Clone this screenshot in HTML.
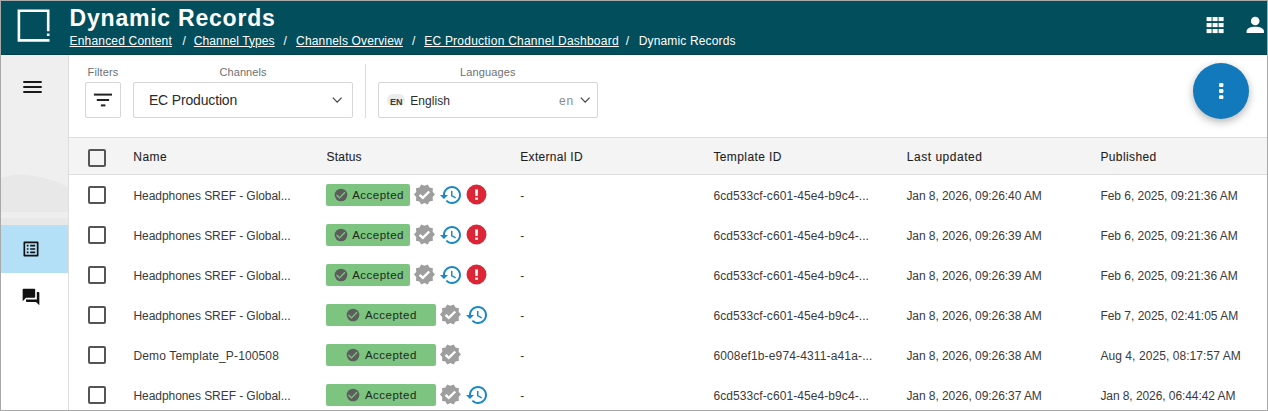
<!DOCTYPE html>
<html><head><meta charset="utf-8">
<style>
html,body{margin:0;padding:0;}
body{width:1268px;height:411px;overflow:hidden;position:relative;background:#fff;font-family:"Liberation Sans",sans-serif;}
span{position:absolute;white-space:nowrap;line-height:1;}
.abs{position:absolute;}
.cb{position:absolute;width:13.5px;height:13.5px;border:2px solid #555;border-radius:2px;box-sizing:content-box;}
.badge{position:absolute;height:22px;background:#7cc47f;border-radius:2px;}
</style></head><body>
<!-- header -->
<div class="abs" style="left:0;top:0;width:1268px;height:55px;background:#024e5c;"></div>
<div class="abs" style="left:0;top:54px;width:1268px;height:1px;background:#013f4b;"></div>
<svg class="abs" style="left:0;top:0" width="60" height="50" viewBox="0 0 60 50">
<path fill="#fff" d="M17.6 9.4 H49.5 V31.3 H46.9 V12.1 H20.2 V39 H49.5 V41.7 H17.6 Z M46.9 33.4 H49.5 V36 H46.9 Z"/>
</svg>
<svg class="abs" style="left:1200px;top:10px" width="68" height="30" viewBox="1200 10 68 30">
<g fill="#fff">
<rect x="1206.6" y="17" width="5" height="4.1"/><rect x="1212.6" y="17" width="5" height="4.1"/><rect x="1218.6" y="17" width="5" height="4.1"/><rect x="1206.6" y="23" width="5" height="4.1"/><rect x="1212.6" y="23" width="5" height="4.1"/><rect x="1218.6" y="23" width="5" height="4.1"/><rect x="1206.6" y="29" width="5" height="4.1"/><rect x="1212.6" y="29" width="5" height="4.1"/><rect x="1218.6" y="29" width="5" height="4.1"/>
<circle cx="1255.2" cy="21" r="4.3"/>
<path d="M1246.6 33.1 V31.2 C1246.6 28.2 1251 26.8 1255.2 26.8 C1259.4 26.8 1263.9 28.2 1263.9 31.2 V33.1 Z"/>
</g></svg>
<!-- sidebar -->
<div class="abs" style="left:0;top:55px;width:68px;height:170px;background:#efefef;"></div>
<svg class="abs" style="left:0;top:55px" width="68" height="170" viewBox="0 55 68 170">
<path d="M0 178 L4 177.5 C8 175.5 14 174.8 24 174.8 C36 175.5 48 178.5 58 182.5 C62 184 66 186 68 187.5 V225 H0 Z" fill="#e8e8e8"/>
<rect x="0" y="212" width="68" height="6" fill="#eeeeee"/>
<rect x="0" y="218" width="68" height="7" fill="#e8e8e8"/>
</svg>
<div class="abs" style="left:0;top:225px;width:68px;height:48px;background:#b3e0f6;"></div>
<div class="abs" style="left:68px;top:55px;width:1px;height:356px;background:#dedede;"></div>
<svg class="abs" style="left:23px;top:80px" width="20" height="15" viewBox="23 80 20 15"><g fill="#1a1a1a"><rect x="23.3" y="81" width="18.4" height="2"/><rect x="23.3" y="86" width="18.4" height="2"/><rect x="23.3" y="91" width="18.4" height="2"/></g></svg>
<svg class="abs" style="left:21px;top:238.6px" width="20" height="20" viewBox="0 0 24 24"><path fill="#111" d="M19 5v14H5V5h14m1.1-2H3.9c-.5 0-.9.4-.9.9v16.2c0 .4.4.9.9.9h16.2c.4 0 .9-.5.9-.9V3.9c0-.5-.5-.9-.9-.9zM11 7h6v2h-6V7zm0 4h6v2h-6v-2zm0 4h6v2h-6zM7 7h2v2H7zm0 4h2v2H7zm0 4h2v2H7z"/></svg>
<svg class="abs" style="left:21px;top:287px" width="20" height="20" viewBox="0 0 24 24"><path fill="#111" d="M21 6h-2v9H6v2c0 .55.45 1 1 1h11l4 4V7c0-.55-.45-1-1-1zm-4 6V3c0-.55-.45-1-1-1H3c-.55 0-1 .45-1 1v14l4-4h10c.55 0 1-.45 1-1z"/></svg>
<!-- filters -->
<div class="abs" style="left:85px;top:82px;width:34px;height:34px;border:1px solid #d6d6d6;border-radius:2px;"></div>
<svg class="abs" style="left:85px;top:82px" width="36" height="36" viewBox="85 82 36 36"><g fill="#222"><rect x="93.9" y="93.6" width="18.1" height="2"/><rect x="96.8" y="99" width="12.3" height="2"/><rect x="100.9" y="104.4" width="4.5" height="2"/></g></svg>
<div class="abs" style="left:133px;top:82px;width:218px;height:34px;border:1px solid #d6d6d6;border-radius:2px;"></div>
<svg class="abs" style="left:330px;top:94px" width="14" height="12" viewBox="330 94 14 12"><path d="M332.8 97.6 L337.2 102.1 L341.6 97.6" stroke="#4a4a4a" stroke-width="1.35" fill="none"/></svg>
<div class="abs" style="left:365px;top:64px;width:1px;height:54px;background:#dcdcdc;"></div>
<div class="abs" style="left:378px;top:82px;width:218px;height:34px;border:1px solid #d6d6d6;border-radius:2px;"></div>
<div class="abs" style="left:386.9px;top:94px;width:18px;height:11.7px;border-radius:6px;background:#ececec;"></div>
<svg class="abs" style="left:578px;top:94px" width="14" height="12" viewBox="578 94 14 12"><path d="M580.8 97.6 L585.2 102.1 L589.6 97.6" stroke="#4a4a4a" stroke-width="1.35" fill="none"/></svg>
<!-- fab -->
<div class="abs" style="left:1193px;top:63px;width:56px;height:56px;border-radius:50%;background:#1279bd;box-shadow:0 3px 9px rgba(0,0,0,0.30);"></div>
<svg class="abs" style="left:1210px;top:80px" width="22" height="22" viewBox="1210 80 22 22"><g fill="#fff"><rect x="1219" y="83" width="4.4" height="3.9" rx="1.2"/><rect x="1219" y="89.1" width="4.4" height="3.9" rx="1.2"/><rect x="1219" y="95.2" width="4.4" height="3.9" rx="1.2"/></g></svg>
<!-- table header -->
<div class="abs" style="left:69px;top:137px;width:1199px;height:38px;background:#f4f4f4;border-top:1px solid #dcdcdc;border-bottom:1px solid #dcdcdc;box-sizing:border-box;"></div>
<div class="cb" style="left:88.3px;top:149.3px"></div>
<div class="cb" style="left:88.3px;top:186.3px"></div>
<div class="badge" style="left:326px;top:184px;width:84px"></div>
<svg class="abs" style="left:333.5px;top:188.3px" width="14" height="14" viewBox="0 0 14 14"><circle cx="7" cy="7" r="6.35" fill="#5d5d5d"/><path d="M2.6 7.1 L5.5 9.9 L11 4.2" stroke="#7cc47f" stroke-width="1.35" fill="none"/></svg>
<svg class="abs" style="left:412.95px;top:183.35px" width="22.9" height="22.9" viewBox="0 0 24 24"><path fill="#9e9e9e" d="M23 12l-2.44-2.79.34-3.69-3.61-.82-1.89-3.2L12 2.96 8.6 1.5 6.71 4.69 3.1 5.5l.34 3.7L1 12l2.44 2.79-.34 3.7 3.61.82L8.6 22.5l3.4-1.47 3.4 1.46 1.89-3.19 3.61-.82-.34-3.69L23 12z"/><path d="M6.9 12.4 L10.3 15.6 L17 8.9" stroke="#fff" stroke-width="2.5" fill="none"/></svg>
<svg class="abs" style="left:438.7px;top:182.8px" width="24" height="24" viewBox="0 0 24 24"><path fill="#1a87c8" d="M13 3c-4.97 0-9 4.03-9 9H1l3.89 3.89.07.14L9 12H6c0-3.870 3.13-7 7-7s7 3.13 7 7-3.13 7-7 7c-1.93 0-3.68-.79-4.94-2.06l-1.420 1.42C8.27 19.99 10.51 21 13 21c4.97 0 9-4.03 9-9s-4.03-9-9-9zm-1 5v5l4.28 2.54.72-1.21-3.5-2.08V8H12z"/></svg>
<svg class="abs" style="left:465.9px;top:184.3px" width="21" height="21" viewBox="0 0 21 21"><circle cx="10.5" cy="10.5" r="9.95" fill="#dc2537"/><path d="M9.1 5.6 H12 L11.7 12 H9.4 Z" fill="#fff"/><rect x="9.2" y="13.5" width="2.7" height="2.3" rx="0.4" fill="#fff"/></svg>
<div class="cb" style="left:88.3px;top:226.3px"></div>
<div class="badge" style="left:326px;top:224px;width:84px"></div>
<svg class="abs" style="left:333.5px;top:228.3px" width="14" height="14" viewBox="0 0 14 14"><circle cx="7" cy="7" r="6.35" fill="#5d5d5d"/><path d="M2.6 7.1 L5.5 9.9 L11 4.2" stroke="#7cc47f" stroke-width="1.35" fill="none"/></svg>
<svg class="abs" style="left:412.95px;top:223.35px" width="22.9" height="22.9" viewBox="0 0 24 24"><path fill="#9e9e9e" d="M23 12l-2.44-2.79.34-3.69-3.61-.82-1.89-3.2L12 2.96 8.6 1.5 6.71 4.69 3.1 5.5l.34 3.7L1 12l2.44 2.79-.34 3.7 3.61.82L8.6 22.5l3.4-1.47 3.4 1.46 1.89-3.19 3.61-.82-.34-3.69L23 12z"/><path d="M6.9 12.4 L10.3 15.6 L17 8.9" stroke="#fff" stroke-width="2.5" fill="none"/></svg>
<svg class="abs" style="left:438.7px;top:222.8px" width="24" height="24" viewBox="0 0 24 24"><path fill="#1a87c8" d="M13 3c-4.97 0-9 4.03-9 9H1l3.89 3.89.07.14L9 12H6c0-3.870 3.13-7 7-7s7 3.13 7 7-3.13 7-7 7c-1.93 0-3.68-.79-4.94-2.06l-1.420 1.42C8.27 19.99 10.51 21 13 21c4.97 0 9-4.03 9-9s-4.03-9-9-9zm-1 5v5l4.28 2.54.72-1.21-3.5-2.08V8H12z"/></svg>
<svg class="abs" style="left:465.9px;top:224.3px" width="21" height="21" viewBox="0 0 21 21"><circle cx="10.5" cy="10.5" r="9.95" fill="#dc2537"/><path d="M9.1 5.6 H12 L11.7 12 H9.4 Z" fill="#fff"/><rect x="9.2" y="13.5" width="2.7" height="2.3" rx="0.4" fill="#fff"/></svg>
<div class="cb" style="left:88.3px;top:266.3px"></div>
<div class="badge" style="left:326px;top:264px;width:84px"></div>
<svg class="abs" style="left:333.5px;top:268.3px" width="14" height="14" viewBox="0 0 14 14"><circle cx="7" cy="7" r="6.35" fill="#5d5d5d"/><path d="M2.6 7.1 L5.5 9.9 L11 4.2" stroke="#7cc47f" stroke-width="1.35" fill="none"/></svg>
<svg class="abs" style="left:412.95px;top:263.35px" width="22.9" height="22.9" viewBox="0 0 24 24"><path fill="#9e9e9e" d="M23 12l-2.44-2.79.34-3.69-3.61-.82-1.89-3.2L12 2.96 8.6 1.5 6.71 4.69 3.1 5.5l.34 3.7L1 12l2.44 2.79-.34 3.7 3.61.82L8.6 22.5l3.4-1.47 3.4 1.46 1.89-3.19 3.61-.82-.34-3.69L23 12z"/><path d="M6.9 12.4 L10.3 15.6 L17 8.9" stroke="#fff" stroke-width="2.5" fill="none"/></svg>
<svg class="abs" style="left:438.7px;top:262.8px" width="24" height="24" viewBox="0 0 24 24"><path fill="#1a87c8" d="M13 3c-4.97 0-9 4.03-9 9H1l3.89 3.89.07.14L9 12H6c0-3.870 3.13-7 7-7s7 3.13 7 7-3.13 7-7 7c-1.93 0-3.68-.79-4.94-2.06l-1.420 1.42C8.27 19.99 10.51 21 13 21c4.97 0 9-4.03 9-9s-4.03-9-9-9zm-1 5v5l4.28 2.54.72-1.21-3.5-2.08V8H12z"/></svg>
<svg class="abs" style="left:465.9px;top:264.3px" width="21" height="21" viewBox="0 0 21 21"><circle cx="10.5" cy="10.5" r="9.95" fill="#dc2537"/><path d="M9.1 5.6 H12 L11.7 12 H9.4 Z" fill="#fff"/><rect x="9.2" y="13.5" width="2.7" height="2.3" rx="0.4" fill="#fff"/></svg>
<div class="cb" style="left:88.3px;top:306.3px"></div>
<div class="badge" style="left:326px;top:304px;width:110px"></div>
<svg class="abs" style="left:346px;top:308.3px" width="14" height="14" viewBox="0 0 14 14"><circle cx="7" cy="7" r="6.35" fill="#5d5d5d"/><path d="M2.6 7.1 L5.5 9.9 L11 4.2" stroke="#7cc47f" stroke-width="1.35" fill="none"/></svg>
<svg class="abs" style="left:438.55px;top:303.35px" width="22.9" height="22.9" viewBox="0 0 24 24"><path fill="#9e9e9e" d="M23 12l-2.44-2.79.34-3.69-3.61-.82-1.89-3.2L12 2.96 8.6 1.5 6.71 4.69 3.1 5.5l.34 3.7L1 12l2.44 2.79-.34 3.7 3.61.82L8.6 22.5l3.4-1.47 3.4 1.46 1.89-3.19 3.61-.82-.34-3.69L23 12z"/><path d="M6.9 12.4 L10.3 15.6 L17 8.9" stroke="#fff" stroke-width="2.5" fill="none"/></svg>
<svg class="abs" style="left:464.5px;top:302.8px" width="24" height="24" viewBox="0 0 24 24"><path fill="#1a87c8" d="M13 3c-4.97 0-9 4.03-9 9H1l3.89 3.89.07.14L9 12H6c0-3.870 3.13-7 7-7s7 3.13 7 7-3.13 7-7 7c-1.93 0-3.68-.79-4.94-2.06l-1.420 1.42C8.27 19.99 10.51 21 13 21c4.97 0 9-4.03 9-9s-4.03-9-9-9zm-1 5v5l4.28 2.54.72-1.21-3.5-2.08V8H12z"/></svg>
<div class="cb" style="left:88.3px;top:346.3px"></div>
<div class="badge" style="left:326px;top:344px;width:110px"></div>
<svg class="abs" style="left:346px;top:348.3px" width="14" height="14" viewBox="0 0 14 14"><circle cx="7" cy="7" r="6.35" fill="#5d5d5d"/><path d="M2.6 7.1 L5.5 9.9 L11 4.2" stroke="#7cc47f" stroke-width="1.35" fill="none"/></svg>
<svg class="abs" style="left:438.55px;top:343.35px" width="22.9" height="22.9" viewBox="0 0 24 24"><path fill="#9e9e9e" d="M23 12l-2.44-2.79.34-3.69-3.61-.82-1.89-3.2L12 2.96 8.6 1.5 6.71 4.69 3.1 5.5l.34 3.7L1 12l2.44 2.79-.34 3.7 3.61.82L8.6 22.5l3.4-1.47 3.4 1.46 1.89-3.19 3.61-.82-.34-3.69L23 12z"/><path d="M6.9 12.4 L10.3 15.6 L17 8.9" stroke="#fff" stroke-width="2.5" fill="none"/></svg>
<div class="cb" style="left:88.3px;top:386.3px"></div>
<div class="badge" style="left:326px;top:384px;width:110px"></div>
<svg class="abs" style="left:346px;top:388.3px" width="14" height="14" viewBox="0 0 14 14"><circle cx="7" cy="7" r="6.35" fill="#5d5d5d"/><path d="M2.6 7.1 L5.5 9.9 L11 4.2" stroke="#7cc47f" stroke-width="1.35" fill="none"/></svg>
<svg class="abs" style="left:438.55px;top:383.35px" width="22.9" height="22.9" viewBox="0 0 24 24"><path fill="#9e9e9e" d="M23 12l-2.44-2.79.34-3.69-3.61-.82-1.89-3.2L12 2.96 8.6 1.5 6.71 4.69 3.1 5.5l.34 3.7L1 12l2.44 2.79-.34 3.7 3.61.82L8.6 22.5l3.4-1.47 3.4 1.46 1.89-3.19 3.61-.82-.34-3.69L23 12z"/><path d="M6.9 12.4 L10.3 15.6 L17 8.9" stroke="#fff" stroke-width="2.5" fill="none"/></svg>
<svg class="abs" style="left:464.5px;top:382.8px" width="24" height="24" viewBox="0 0 24 24"><path fill="#1a87c8" d="M13 3c-4.97 0-9 4.03-9 9H1l3.89 3.89.07.14L9 12H6c0-3.870 3.13-7 7-7s7 3.13 7 7-3.13 7-7 7c-1.93 0-3.68-.79-4.94-2.06l-1.420 1.42C8.27 19.99 10.51 21 13 21c4.97 0 9-4.03 9-9s-4.03-9-9-9zm-1 5v5l4.28 2.54.72-1.21-3.5-2.08V8H12z"/></svg>
<span style="left:69.60px;top:6.83px;font-size:23px;color:#ffffff;font-weight:700;letter-spacing:0.778px;">Dynamic Records</span>
<span style="left:69.50px;top:34.54px;font-size:12px;color:#ffffff;font-weight:400;letter-spacing:0.188px;text-decoration:underline;">Enhanced Content</span>
<span style="left:182.60px;top:34.54px;font-size:12px;color:#ffffff;font-weight:400;letter-spacing:0.000px;">/</span>
<span style="left:193.80px;top:34.54px;font-size:12px;color:#ffffff;font-weight:400;letter-spacing:0.079px;text-decoration:underline;">Channel Types</span>
<span style="left:283.40px;top:34.54px;font-size:12px;color:#ffffff;font-weight:400;letter-spacing:0.000px;">/</span>
<span style="left:296.10px;top:34.54px;font-size:12px;color:#ffffff;font-weight:400;letter-spacing:0.158px;text-decoration:underline;">Channels Overview</span>
<span style="left:412.00px;top:34.54px;font-size:12px;color:#ffffff;font-weight:400;letter-spacing:0.000px;">/</span>
<span style="left:424.20px;top:34.54px;font-size:12px;color:#ffffff;font-weight:400;letter-spacing:0.231px;text-decoration:underline;">EC Production Channel Dashboard</span>
<span style="left:625.80px;top:34.54px;font-size:12px;color:#ffffff;font-weight:400;letter-spacing:0.000px;">/</span>
<span style="left:638.70px;top:34.54px;font-size:12px;color:#ffffff;font-weight:400;letter-spacing:0.158px;">Dynamic Records</span>
<span style="left:87.60px;top:66.59px;font-size:11px;color:#707070;font-weight:400;letter-spacing:0.109px;">Filters</span>
<span style="left:219.50px;top:66.59px;font-size:11px;color:#707070;font-weight:400;letter-spacing:0.075px;">Channels</span>
<span style="left:460.10px;top:66.59px;font-size:11px;color:#707070;font-weight:400;letter-spacing:0.132px;">Languages</span>
<span style="left:148.90px;top:93.15px;font-size:14px;color:#2b2b2b;font-weight:400;letter-spacing:-0.157px;">EC Production</span>
<span style="left:410.20px;top:94.74px;font-size:12px;color:#2b2b2b;font-weight:400;letter-spacing:0.069px;">English</span>
<span style="left:558.90px;top:94.74px;font-size:12px;color:#8c8c8c;font-weight:400;letter-spacing:0.926px;">en</span>
<span style="left:390.10px;top:97.58px;font-size:9px;color:#3a3a3a;font-weight:700;letter-spacing:-0.003px;">EN</span>
<span style="left:133.30px;top:150.64px;font-size:12px;color:#1f1f1f;font-weight:400;letter-spacing:0.455px;-webkit-text-stroke:0.1px #1f1f1f;">Name</span>
<span style="left:326.50px;top:150.64px;font-size:12px;color:#1f1f1f;font-weight:400;letter-spacing:0.216px;-webkit-text-stroke:0.1px #1f1f1f;">Status</span>
<span style="left:520.30px;top:150.64px;font-size:12px;color:#1f1f1f;font-weight:400;letter-spacing:0.301px;-webkit-text-stroke:0.1px #1f1f1f;">External ID</span>
<span style="left:713.40px;top:150.64px;font-size:12px;color:#1f1f1f;font-weight:400;letter-spacing:0.404px;-webkit-text-stroke:0.1px #1f1f1f;">Template ID</span>
<span style="left:906.80px;top:150.64px;font-size:12px;color:#1f1f1f;font-weight:400;letter-spacing:0.516px;-webkit-text-stroke:0.1px #1f1f1f;">Last updated</span>
<span style="left:1100.40px;top:150.64px;font-size:12px;color:#1f1f1f;font-weight:400;letter-spacing:0.396px;-webkit-text-stroke:0.1px #1f1f1f;">Published</span>
<span style="left:133.50px;top:189.64px;font-size:12px;color:#3a3a3a;font-weight:400;letter-spacing:-0.066px;">Headphones SREF - Global...</span>
<span style="left:520.30px;top:189.64px;font-size:12px;color:#3a3a3a;font-weight:400;letter-spacing:0.000px;">-</span>
<span style="left:713.40px;top:189.64px;font-size:12px;color:#3a3a3a;font-weight:400;letter-spacing:0.081px;">6cd533cf-c601-45e4-b9c4-...</span>
<span style="left:906.40px;top:189.64px;font-size:12px;color:#3a3a3a;font-weight:400;letter-spacing:-0.058px;">Jan 8, 2026, 09:26:40 AM</span>
<span style="left:1100.40px;top:189.64px;font-size:12px;color:#3a3a3a;font-weight:400;letter-spacing:-0.033px;">Feb 6, 2025, 09:21:36 AM</span>
<span style="left:352.20px;top:189.97px;font-size:11.5px;color:#1f2a1f;font-weight:400;letter-spacing:0.478px;">Accepted</span>
<span style="left:133.50px;top:229.64px;font-size:12px;color:#3a3a3a;font-weight:400;letter-spacing:-0.066px;">Headphones SREF - Global...</span>
<span style="left:520.30px;top:229.64px;font-size:12px;color:#3a3a3a;font-weight:400;letter-spacing:0.000px;">-</span>
<span style="left:713.40px;top:229.64px;font-size:12px;color:#3a3a3a;font-weight:400;letter-spacing:0.081px;">6cd533cf-c601-45e4-b9c4-...</span>
<span style="left:906.40px;top:229.64px;font-size:12px;color:#3a3a3a;font-weight:400;letter-spacing:-0.058px;">Jan 8, 2026, 09:26:39 AM</span>
<span style="left:1100.40px;top:229.64px;font-size:12px;color:#3a3a3a;font-weight:400;letter-spacing:-0.033px;">Feb 6, 2025, 09:21:36 AM</span>
<span style="left:352.20px;top:229.97px;font-size:11.5px;color:#1f2a1f;font-weight:400;letter-spacing:0.478px;">Accepted</span>
<span style="left:133.50px;top:269.64px;font-size:12px;color:#3a3a3a;font-weight:400;letter-spacing:-0.066px;">Headphones SREF - Global...</span>
<span style="left:520.30px;top:269.64px;font-size:12px;color:#3a3a3a;font-weight:400;letter-spacing:0.000px;">-</span>
<span style="left:713.40px;top:269.64px;font-size:12px;color:#3a3a3a;font-weight:400;letter-spacing:0.081px;">6cd533cf-c601-45e4-b9c4-...</span>
<span style="left:906.40px;top:269.64px;font-size:12px;color:#3a3a3a;font-weight:400;letter-spacing:-0.058px;">Jan 8, 2026, 09:26:39 AM</span>
<span style="left:1100.40px;top:269.64px;font-size:12px;color:#3a3a3a;font-weight:400;letter-spacing:-0.033px;">Feb 6, 2025, 09:21:36 AM</span>
<span style="left:352.20px;top:269.97px;font-size:11.5px;color:#1f2a1f;font-weight:400;letter-spacing:0.478px;">Accepted</span>
<span style="left:133.50px;top:309.64px;font-size:12px;color:#3a3a3a;font-weight:400;letter-spacing:-0.066px;">Headphones SREF - Global...</span>
<span style="left:520.30px;top:309.64px;font-size:12px;color:#3a3a3a;font-weight:400;letter-spacing:0.000px;">-</span>
<span style="left:713.40px;top:309.64px;font-size:12px;color:#3a3a3a;font-weight:400;letter-spacing:0.081px;">6cd533cf-c601-45e4-b9c4-...</span>
<span style="left:906.40px;top:309.64px;font-size:12px;color:#3a3a3a;font-weight:400;letter-spacing:-0.058px;">Jan 8, 2026, 09:26:38 AM</span>
<span style="left:1100.40px;top:309.64px;font-size:12px;color:#3a3a3a;font-weight:400;letter-spacing:-0.016px;">Feb 7, 2025, 02:41:05 AM</span>
<span style="left:364.90px;top:309.97px;font-size:11.5px;color:#1f2a1f;font-weight:400;letter-spacing:0.492px;">Accepted</span>
<span style="left:133.50px;top:349.64px;font-size:12px;color:#3a3a3a;font-weight:400;letter-spacing:0.134px;">Demo Template_P-100508</span>
<span style="left:520.30px;top:349.64px;font-size:12px;color:#3a3a3a;font-weight:400;letter-spacing:0.000px;">-</span>
<span style="left:713.40px;top:349.64px;font-size:12px;color:#3a3a3a;font-weight:400;letter-spacing:0.146px;">6008ef1b-e974-4311-a41a-...</span>
<span style="left:906.40px;top:349.64px;font-size:12px;color:#3a3a3a;font-weight:400;letter-spacing:-0.058px;">Jan 8, 2026, 09:26:38 AM</span>
<span style="left:1100.40px;top:349.64px;font-size:12px;color:#3a3a3a;font-weight:400;letter-spacing:0.072px;">Aug 4, 2025, 08:17:57 AM</span>
<span style="left:364.90px;top:349.97px;font-size:11.5px;color:#1f2a1f;font-weight:400;letter-spacing:0.492px;">Accepted</span>
<span style="left:133.50px;top:389.64px;font-size:12px;color:#3a3a3a;font-weight:400;letter-spacing:-0.066px;">Headphones SREF - Global...</span>
<span style="left:520.30px;top:389.64px;font-size:12px;color:#3a3a3a;font-weight:400;letter-spacing:0.000px;">-</span>
<span style="left:713.40px;top:389.64px;font-size:12px;color:#3a3a3a;font-weight:400;letter-spacing:0.081px;">6cd533cf-c601-45e4-b9c4-...</span>
<span style="left:906.40px;top:389.64px;font-size:12px;color:#3a3a3a;font-weight:400;letter-spacing:-0.058px;">Jan 8, 2026, 09:26:37 AM</span>
<span style="left:1100.40px;top:389.64px;font-size:12px;color:#3a3a3a;font-weight:400;letter-spacing:-0.075px;">Jan 8, 2026, 06:44:42 AM</span>
<span style="left:364.90px;top:389.97px;font-size:11.5px;color:#1f2a1f;font-weight:400;letter-spacing:0.492px;">Accepted</span>
<!-- window border -->
<div class="abs" style="left:0;top:0;width:1268px;height:411px;box-sizing:border-box;border:1px solid #a9a9a9;pointer-events:none;"></div>
</body></html>
